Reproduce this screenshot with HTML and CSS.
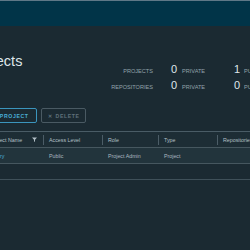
FILE: index.html
```html
<!DOCTYPE html>
<html lang="en">
<head>
    <meta charset="UTF-8">
    <meta name="viewport" content="width=device-width, initial-scale=1.0">
    <title>Projects</title>
    <link rel="stylesheet" href="styles.css">
</head>
<body>
    <div class="topbar"></div>
    <header class="header"></header>

    <main class="content">
        <!-- Заголовок и сводка -->
        <div class="page-head">
            <h1 class="title">Projects</h1>
            <div class="stats">
                <span class="stat-label">PROJECTS</span>
                <span class="stat-num">0</span>
                <span class="stat-unit">PRIVATE</span>
                <span class="stat-num">1</span>
                <span class="stat-unit">PUBLIC</span>

                <span class="stat-label">REPOSITORIES</span>
                <span class="stat-num">0</span>
                <span class="stat-unit">PRIVATE</span>
                <span class="stat-num">0</span>
                <span class="stat-unit">PUBLIC</span>
            </div>
        </div>

        <!-- Кнопки -->
        <div class="toolbar">
            <button class="btn btn-primary"><span class="btn-icon">+</span>NEW PROJECT</button>
            <button class="btn btn-disabled"><span class="btn-icon">&#x2715;</span>DELETE</button>
        </div>

        <!-- Таблица проектов -->
        <div class="datagrid">
            <div class="dg-row dg-head">
                <div class="dg-cell"></div>
                <div class="dg-cell dg-name">
                    <span>Project Name</span>
                    <svg class="filter-icon" width="5" height="5" viewBox="0 0 5 5"><path d="M0 0.5h5L3 2.8v2.2L2 4.3V2.8z" fill="#b3c0c7"/></svg>
                </div>
                <div class="dg-cell dg-sep">Access Level</div>
                <div class="dg-cell dg-sep">Role</div>
                <div class="dg-cell dg-sep">Type</div>
                <div class="dg-cell dg-sep">Repositories Count</div>
            </div>
            <div class="dg-row dg-body">
                <div class="dg-cell"></div>
                <div class="dg-cell"><a class="link" href="#">library</a></div>
                <div class="dg-cell">Public</div>
                <div class="dg-cell">Project Admin</div>
                <div class="dg-cell">Project</div>
                <div class="dg-cell dg-count">0</div>
            </div>
            <div class="dg-foot"></div>
        </div>
    </main>
</body>
</html>
```

FILE: styles.css
```css
body {
    margin: 0;
    overflow: hidden;
    background-color: #1b2a32;
    font-family: "Liberation Sans", Arial, sans-serif;
    color: #acb9c0;
}
.topbar {
    height: 1px;
    background-color: #5f7887;
}
.header {
    height: 25px;
    background-color: #013448;
}
.content {
    margin-left: -30px;
    width: 314px;
    padding-top: 28px;
}
.page-head {
    display: flex;
    align-items: flex-start;
}
.title {
    margin: 0;
    font-size: 14.5px;
    line-height: 14px;
    font-weight: normal;
    color: #dfe6ea;
}
.stats {
    margin-left: auto;
    margin-top: 7px;
    display: grid;
    grid-template-columns: 44px 24px 38px 25px 44px;
    grid-auto-rows: 16px;
    align-items: baseline;
    line-height: 16px;
}
.stat-label {
    text-align: right;
    font-size: 5.6px;
    color: #93a2ab;
}
.stat-num {
    text-align: right;
    font-size: 11px;
    color: #dfe6ea;
}
.stat-unit {
    padding-left: 5px;
    font-size: 5.6px;
    color: #93a2ab;
}
.stat-unit:last-child,
.stat-unit:nth-child(5) {
    padding-left: 4px;
}
.toolbar {
    display: flex;
    gap: 4px;
    margin-top: 15px;
}
.btn {
    display: inline-flex;
    align-items: center;
    gap: 4px;
    height: 15px;
    box-sizing: border-box;
    padding: 0 6px 0 6px;
    border: 1px solid;
    border-radius: 2px;
    background: transparent;
    font-family: inherit;
    font-size: 5.2px;
    font-weight: bold;
    letter-spacing: 0.6px;
}
.btn-icon {
    font-size: 5px;
    letter-spacing: 0;
}
.btn-primary {
    border-color: #3b95bd;
    color: #49afd9;
    padding-right: 7px;
}
.btn-disabled {
    border-color: #4a5a63;
    color: #5f717b;
    padding-right: 5px;
}
.datagrid {
    margin-top: 8px;
    border-top: 1px solid #4a5c66;
}
.dg-row {
    display: grid;
    grid-template-columns: 14px 59px 59px 56px 59px 67px;
    height: 15px;
    border-bottom: 1px solid #46575f;
    font-size: 5.3px;
}
.dg-head {
    background-color: #1d2d35;
    color: #b3c0c7;
}
.dg-body {
    background-color: #22343c;
    color: #acb9c0;
}
.dg-cell {
    display: flex;
    align-items: center;
    padding: 0 6px;
    white-space: nowrap;
    overflow: hidden;
}
.dg-name {
    justify-content: space-between;
}
.dg-count {
    justify-content: flex-end;
}
.dg-sep {
    background: linear-gradient(#4c5d67, #4c5d67) left center / 1px 10px no-repeat;
}
.filter-icon {
    flex: none;
}
.link {
    color: #4aaed9;
    text-decoration: none;
}
.dg-foot {
    height: 15px;
    border-bottom: 1px solid #3f5059;
}
```
